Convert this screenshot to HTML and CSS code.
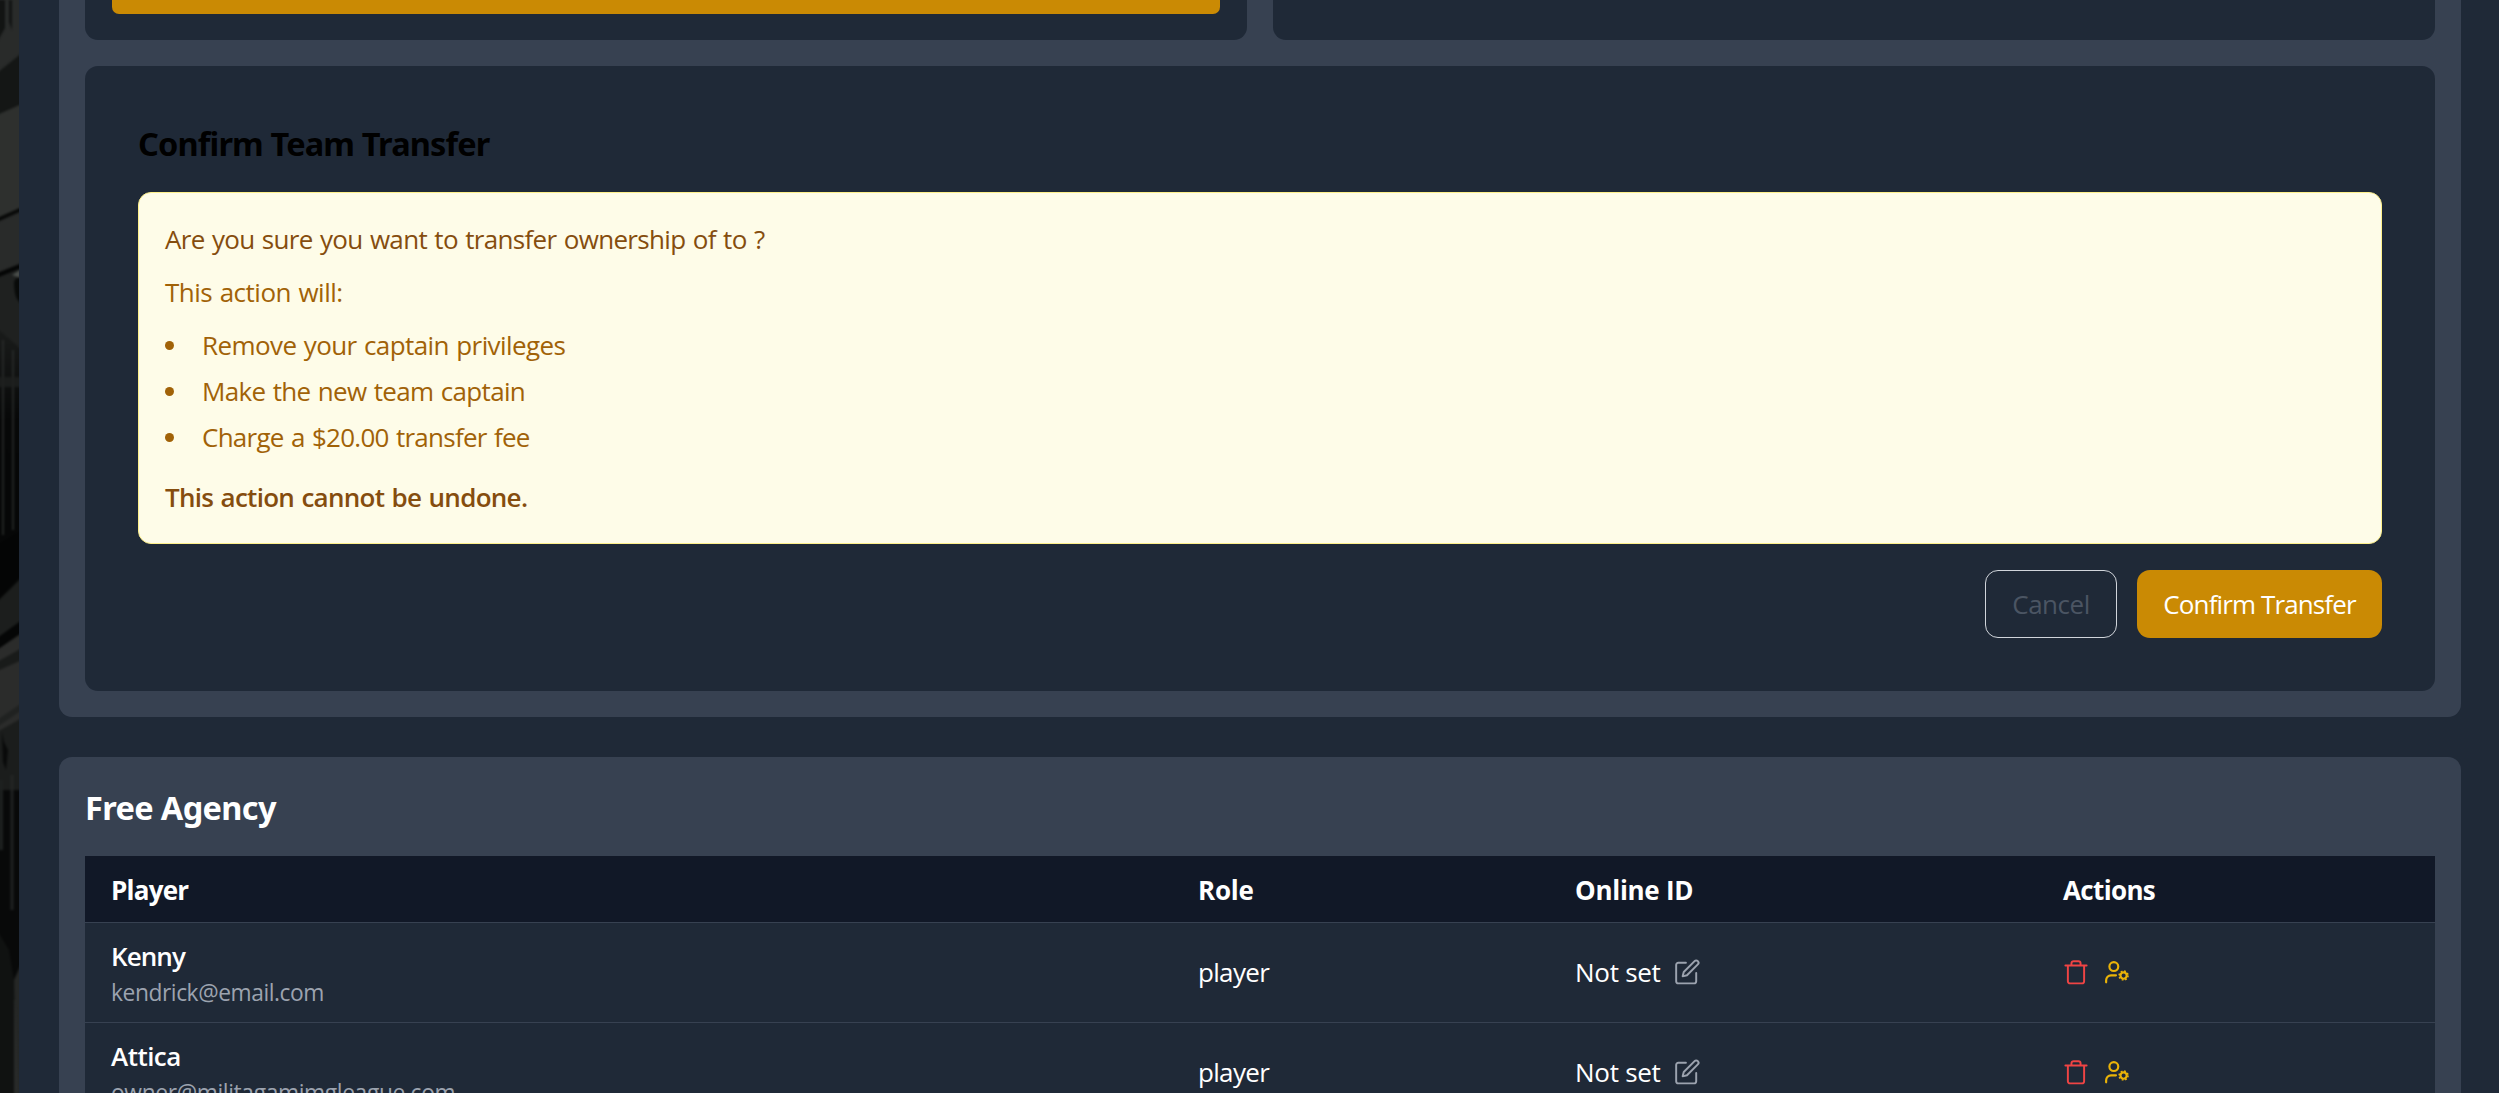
FILE: index.html
```html
<!DOCTYPE html>
<html lang="en">
<head>
<meta charset="utf-8">
<title>Team Management</title>
<link rel="stylesheet" href="styles.css">
</head>
<body>
<svg class="symbols" aria-hidden="true">
  <symbol id="edit" viewBox="0 0 24 24"><path d="M11 3.500H4a2 2 0 0 0-2 2v15a2 2 0 0 0 2 2h14.500a2 2 0 0 0 2-2V13"/><path d="M19 2a2.121 2.121 0 0 1 3 3L12 15l-4 1 1-4z"/></symbol>
  <symbol id="trash" viewBox="0 0 24 24"><path d="M2.200 6h19.600M19.500 6v14.500a2 2 0 0 1-2 2h-11a2 2 0 0 1-2-2V6M7.800 6V4a2 2 0 0 1 2-2h4.400a2 2 0 0 1 2 2v2"/></symbol>
  <symbol id="user-cog" viewBox="0 0 24 24"><circle cx="10" cy="7" r="4.100"/><path d="M2.900 21.500v-1.900a4.500 4.500 0 0 1 4.500-4.500H12"/><circle cx="19" cy="15.300" r="2.900"/><circle cx="19" cy="15.300" r="4.100" stroke-width="1.500" stroke-linecap="butt" stroke-dasharray="1.610 1.610"/></symbol>
</svg>
<div class="layout">
  <svg class="backdrop" viewBox="0 0 19 1093" preserveAspectRatio="none" aria-hidden="true">
    <defs>
      <linearGradient id="deep" x1="0" y1="0" x2="0" y2="1"><stop offset="0" stop-color="#1a1c1b"/><stop offset=".4" stop-color="#070808"/><stop offset="1" stop-color="#060707"/></linearGradient>
      <filter id="soft" color-interpolation-filters="sRGB"><feGaussianBlur stdDeviation=".8"/></filter>
    </defs>
    <rect width="19" height="1093" fill="#292b2a"/>
    <g filter="url(#soft)">
      <path d="M-3 0H5V28L-3 42zM9 0h3v30l-3 -8z" fill="#121413"/>
      <path d="M-3 73L22 53V104L-3 115z" fill="#141615"/>
      <path d="M-3 115L22 104V208L-3 218z" fill="#2e302e"/>
      <path d="M-3 218L22 207V211L-3 222z" fill="#080908"/>
      <path d="M-3 273L22 263V268L-3 278z" fill="#050606"/>
      <path d="M-3 278L22 268V350L-3 330z" fill="#1f2120"/>
      <path d="M12 275l8-5v8z" fill="#494d4a"/>
      <path d="M14 282q2-6 8-4v26q-8-4-8-22z" fill="#080a09"/>
      <path d="M-3 328L22 350V545L-3 560z" fill="url(#deep)"/>
      <path d="M3 340V535M13 350V530" stroke="#2b2e2d" stroke-width="2" opacity=".75"/>
      <path d="M-3 377h25v10h-25z" fill="#1e201f" opacity=".8"/>
      <path d="M-3 545L22 530V578L-3 602z" fill="#040505"/>
      <path d="M-3 602L22 577V622L-3 640z" fill="#1c1e1d"/>
      <path d="M-3 638L22 620V633L-3 650z" fill="#050606"/>
      <path d="M-3 650L22 633V745L-3 750z" fill="#2b2c2b"/>
      <path d="M-3 662L22 648V660L-3 671z" fill="#191b1a"/>
      <path d="M-3 720L22 703V710L-3 727z" fill="#202221"/>
      <path d="M-3 732L22 718V1000L-3 1000z" fill="#1b1d1c"/>
      <path d="M2 732l2 10 4 8-2 20-3-8z" fill="#090a0a"/>
      <path d="M-3 790h25v195l-7 0-8-25-10 0z" fill="#080909"/>
      <path d="M12 775V910" stroke="#252827" stroke-width="3" opacity=".8"/>
      <path d="M1 780V850" stroke="#1d201f" stroke-width="4"/>
      <path d="M-3 930L9 950 14 980V1100H-3z" fill="#101211"/>
      <path d="M14 980l8-18V1100h-3z" fill="#252726"/>
    </g>
  </svg>
  <main class="page">
    <section class="panel panel-transfer">
      <div class="cards">
        <div class="card"><div class="gold-bar"></div></div>
        <div class="card"></div>
      </div>
      <div class="confirm">
        <h3>Confirm Team Transfer</h3>
        <div class="warning">
          <p class="question">Are you sure you want to transfer ownership of to ?</p>
          <p class="intro">This action will:</p>
          <ul>
            <li class="remove">Remove your captain privileges</li>
            <li class="make">Make the new team captain</li>
            <li class="charge">Charge a $20.00 transfer fee</li>
          </ul>
          <p class="final">This action cannot be undone.</p>
        </div>
        <div class="buttons">
          <button class="cancel">Cancel</button>
          <button class="submit">Confirm Transfer</button>
        </div>
      </div>
    </section>
    <section class="panel panel-agency">
      <h2>Free Agency</h2>
      <div class="table">
        <div class="row head">
          <div class="h-player">Player</div><div class="h-role">Role</div><div class="h-id">Online ID</div><div class="h-actions">Actions</div>
        </div>
        <div class="row">
          <div><div class="name kenny">Kenny</div><div class="email">kendrick@email.com</div></div>
          <div class="role">player</div>
          <div class="online"><span>Not set</span><svg class="icon edit"><use href="#edit"/></svg></div>
          <div class="actions"><svg class="icon trash"><use href="#trash"/></svg><svg class="icon cog"><use href="#user-cog"/></svg></div>
        </div>
        <div class="row">
          <div><div class="name">Attica</div><div class="email long">owner@militagamimgleague.com</div></div>
          <div class="role">player</div>
          <div class="online"><span>Not set</span><svg class="icon edit"><use href="#edit"/></svg></div>
          <div class="actions"><svg class="icon trash"><use href="#trash"/></svg><svg class="icon cog"><use href="#user-cog"/></svg></div>
        </div>
      </div>
    </section>
  </main>
</div>
</body>
</html>
```
FILE: styles.css
```css
* { box-sizing: border-box; }
body {
  margin: 0;
  height: 1093px;
  overflow: hidden;
  background: #1f2937;
  color: #fff;
  font: 26px/40px "Open Sans", "Noto Sans", sans-serif;
}
h2, h3, p, ul { margin: 0; padding: 0; }
.symbols { display: none; }
.layout { display: flex; height: 1093px; overflow: hidden; }
.backdrop { flex: none; width: 19px; height: 1093px; }
.page {
  flex: 1;
  display: flex;
  flex-direction: column;
  gap: 40px;
  padding: 0 38px 0 40px;
  background: #1f2937;
}
.panel { flex: none; background: #374151; padding: 0 26px; }
.panel-transfer { height: 717px; border-radius: 0 0 13px 13px; }
.panel-agency { height: 400px; border-radius: 13px 13px 0 0; padding-top: 28px; }

.cards { display: grid; grid-template-columns: 1fr 1fr; gap: 26px; height: 40px; margin-bottom: 26px; }
.card { background: #1f2937; border-radius: 0 0 13px 13px; padding: 0 27px; }
.gold-bar { height: 14px; background: #ca8a04; border-radius: 0 0 7px 7px; }

.confirm { height: 625px; padding: 55px 53px 53px; background: #1f2937; border-radius: 13px; }
h3 { margin-bottom: 25px; color: #000; font-family: "Noto Sans", sans-serif; font-size: 32.500px; line-height: 46px; font-weight: 700; letter-spacing: -.84px; }
.warning {
  height: 352px;
  padding: 26px;
  background: #fefce8;
  border: 1px solid #fef08a;
  border-radius: 13px;
  color: #a16207;
  word-spacing: 1.200px;
}
.question { margin-bottom: 13px; color: #854d0e; letter-spacing: -.67px; }
.intro { margin-bottom: 13px; letter-spacing: -.5px; }
.warning ul { display: grid; gap: 6px; margin-bottom: 20px; list-style: none; }
.warning li { display: flex; align-items: center; gap: 28px; }
.warning li::before { content: ""; width: 9px; height: 9px; border-radius: 50%; background: #a16207; }
.remove { letter-spacing: -.59px; }
.make { letter-spacing: -.67px; }
.charge { letter-spacing: -.73px; }
.final { color: #854d0e; font-weight: 600; letter-spacing: -.71px; }

.buttons { display: flex; justify-content: flex-end; gap: 20px; margin-top: 26px; }
button { height: 68px; padding: 0; border: 0; border-radius: 13px; font: inherit; }
.cancel { width: 132px; border: 1px solid #d1d5db; background: none; color: #4b5563; letter-spacing: -.48px; }
.submit { width: 245px; background: #ca8a04; color: #fff; letter-spacing: -.88px; }

h2 { height: 46px; margin-bottom: 25px; font-family: "Noto Sans", sans-serif; font-size: 32.500px; line-height: 46px; font-weight: 700; letter-spacing: -.64px; }
.row {
  display: grid;
  grid-template-columns: 1087px 377px 488px 1fr;
  align-items: center;
  height: 100px;
  padding-left: 26px;
  background: #1f2937;
  border-bottom: 1px solid #374151;
}
.head { height: 67px; background: #111827; font-weight: 700; }
.head > div { padding-top: 1px; }
.h-player { letter-spacing: -.76px; }
.h-role { letter-spacing: -.2px; }
.h-id { letter-spacing: -.28px; }
.h-actions { letter-spacing: -.64px; }
.name { padding-top: 1px; font-weight: 600; letter-spacing: -.54px; }
.kenny { letter-spacing: -.93px; }
.email { color: #9ca3af; font-size: 22.800px; line-height: 34px; letter-spacing: -.44px; }
.long { letter-spacing: -.37px; }
.role { padding-bottom: 1px; letter-spacing: -.68px; }
.online { display: flex; align-items: center; gap: 13px; padding-bottom: 1px; letter-spacing: -.27px; }
.actions { display: flex; align-items: center; gap: 14px; padding-bottom: 1px; }
.icon { width: 26px; height: 26px; fill: none; stroke: currentColor; stroke-width: 1.800; stroke-linecap: round; stroke-linejoin: round; }
.edit { color: #9ca3af; }
.trash { color: #ef4444; }
.cog { color: #eab308; stroke-width: 2; }
```
